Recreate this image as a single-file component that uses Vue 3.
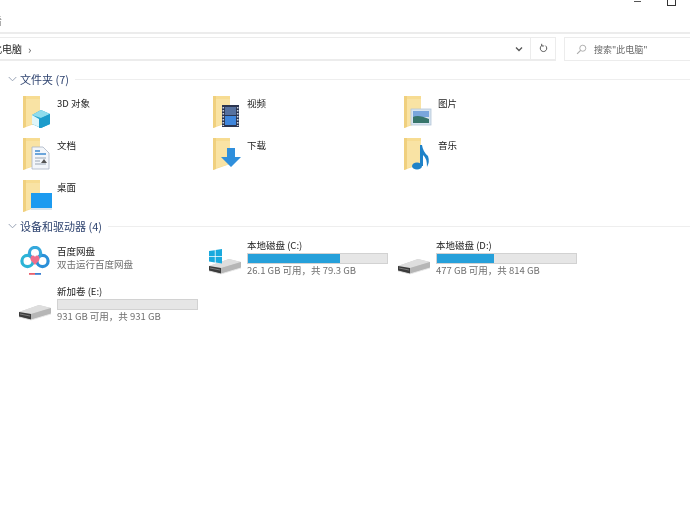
<script setup>
const folders = [
  { name: '3D 对象', kind: 'cube' },
  { name: '视频', kind: 'film' },
  { name: '图片', kind: 'photo' },
  { name: '文档', kind: 'doc' },
  { name: '下载', kind: 'down' },
  { name: '音乐', kind: 'music' },
  { name: '桌面', kind: 'desk' }
]
const drives = [
  { name: '本地磁盘 (C:)', used: 66, info: '26.1 GB 可用，共 79.3 GB', win: true },
  { name: '本地磁盘 (D:)', used: 41, info: '477 GB 可用，共 814 GB', win: false },
  { name: '新加卷 (E:)', used: 0, info: '931 GB 可用，共 931 GB', win: false }
]
</script>

<template>
  <div class="page">
    <div class="toolbar">
      <span class="tab">看</span>
      <div class="winbtns">
        <i class="minbtn"></i>
        <i class="maxbtn"></i>
      </div>
    </div>
    <div class="navrow">
      <div class="address">
        <span class="crumb">此电脑</span>
        <span class="sep">›</span>
        <svg class="dropdown" viewBox="0 0 8 6" width="8" height="6"><path d="M1 1.5 4 4.5 7 1.5" fill="none" stroke="#555" stroke-width="1.3"/></svg>
        <div class="refresh">
          <svg viewBox="0 0 10 12" width="9" height="11"><path d="M3 2.8A3.6 3.6 0 1 0 7 2.8M3 .8V3.2H5.4" fill="none" stroke="#555" stroke-width="1.1"/></svg>
        </div>
      </div>
      <div class="search">
        <svg viewBox="0 0 12 12" width="11" height="11"><circle cx="7.4" cy="4.6" r="3.3" fill="none" stroke="#aaa" stroke-width="1"/><path d="M5 7 1.2 10.8" stroke="#aaa" stroke-width="1.2"/></svg>
        <span>搜索"此电脑"</span>
      </div>
    </div>

    <div class="section-head first">
      <svg viewBox="0 0 10 6" width="9" height="6"><path d="M.8.8 5 5 9.2.8" fill="none" stroke="#8d99ad" stroke-width="1"/></svg>
      <span class="title">文件夹 (7)</span>
      <span class="rule"></span>
    </div>
    <div class="folders">
      <div v-for="f in folders" :key="f.name" class="folder">
        <svg class="ficon" viewBox="0 0 36 34" width="36" height="34">
          <path d="M1 1H18V27L1 33Z" fill="#f7dc92"/>
          <path d="M1 1H4V32L1 33Z" fill="#f0d07e"/>
          <path d="M4 4H18V27L4 31Z" fill="#f9e3a4"/>
          <g v-if="f.kind === 'cube'">
            <path d="M10 20 19 15 28 19V29L19 33 10 29Z" fill="#23a5cf"/>
            <path d="M10 20 19 15 28 19 19 23Z" fill="#8fdcec"/>
            <path d="M10 20 17 24V32L10 29Z" fill="#dff6fa"/>
            <path d="M17 24 28 19V29L19 33H17Z" fill="#1d9ccb"/>
          </g>
          <g v-else-if="f.kind === 'film'">
            <rect x="10" y="10" width="17" height="22" fill="#2b3550"/>
            <rect x="13" y="12" width="11" height="8" fill="#56719f"/>
            <rect x="13" y="21" width="11" height="9" fill="#3f86dc"/>
            <path d="M11.3 12V31M25.7 12V31" stroke="#cfd6e2" stroke-width="1.6" stroke-dasharray="1.5 1.5"/>
          </g>
          <g v-else-if="f.kind === 'photo'">
            <rect x="8" y="14" width="20" height="16" fill="#d8e4f0" stroke="#b4c6d8" stroke-width=".8"/>
            <rect x="10" y="16" width="16" height="6" fill="#7aa6dc"/>
            <path d="M10 22Q15 19 26 24V28H10Z" fill="#37756b"/>
          </g>
          <g v-else-if="f.kind === 'doc'">
            <path d="M10 10H21L27 16V32H10Z" fill="#f3f6fa" stroke="#a8b4c4" stroke-width=".8"/>
            <path d="M13 14H18M13 17H24" stroke="#3f8ad0" stroke-width="1.4"/>
            <path d="M13 21H24M13 24H18M13 27H24" stroke="#9aa6b4" stroke-width="1"/>
            <path d="M19 26 22 22 25 26Z" fill="#555"/>
          </g>
          <g v-else-if="f.kind === 'down'">
            <path d="M15 11H23V20H29L19 30 9 20H15Z" fill="#2f8fdc"/>
          </g>
          <g v-else-if="f.kind === 'music'">
            <ellipse cx="14" cy="29" rx="5" ry="3.6" fill="#1f82c8"/>
            <path d="M17 29V8H19Q20 15 25 19Q27 25 24 30Q24 21 20 18V29Z" fill="#1f82c8"/>
          </g>
          <g v-else>
            <rect x="9" y="14" width="21" height="15" fill="#1c9bf0"/>
            <rect x="9" y="29" width="21" height="2" fill="#d9e6ef"/>
          </g>
        </svg>
        <span class="fname">{{ f.name }}</span>
      </div>
    </div>

    <div class="section-head second">
      <svg viewBox="0 0 10 6" width="9" height="6"><path d="M.8.8 5 5 9.2.8" fill="none" stroke="#8d99ad" stroke-width="1"/></svg>
      <span class="title">设备和驱动器 (4)</span>
      <span class="rule"></span>
    </div>
    <div class="drives">
      <div class="drive baidu">
        <svg class="bicon" viewBox="0 0 30 32" width="30" height="32">
          <circle cx="7.5" cy="15" r="5.6" fill="none" stroke="#2cb4d6" stroke-width="3.2"/>
          <circle cx="22.5" cy="15" r="5.6" fill="none" stroke="#2a8fd8" stroke-width="3.2"/>
          <circle cx="15" cy="7" r="5.6" fill="none" stroke="#35a8dc" stroke-width="3.2"/>
          <path d="M15 19 10.6 14Q10 9.6 13 9.6 14.4 9.6 15 11 15.6 9.6 17 9.6 20 9.6 19.4 14Z" fill="#ef6f8c"/>
          <rect x="9" y="27" width="6" height="1.8" fill="#e8606e"/>
          <rect x="15" y="27" width="6" height="1.8" fill="#3c7fd0"/>
        </svg>
        <div class="dtext">
          <div class="dname">百度网盘</div>
          <div class="dinfo">双击运行百度网盘</div>
        </div>
      </div>
      <div v-for="d in drives" :key="d.name" class="drive">
        <div class="dicon">
          <svg viewBox="0 0 34 32" width="34" height="32">
            <path d="M1 23 21 16 33 19V25L13 31 1 28Z" fill="#cfcfcf"/>
            <path d="M1 23 21 16 33 19 13 25Z" fill="#dedede"/>
            <path d="M1 23 13 25V31L1 28Z" fill="#3b3b3b"/>
            <path d="M13 25 33 19V25L13 31Z" fill="#b6b6b6"/>
            <path d="M2 25 12 27" stroke="#8a8a8a" stroke-width=".8"/>
            <path d="M1 28 13 31 33 25" fill="none" stroke="#ececec" stroke-width=".9"/>
            <g v-if="d.win" fill="#19a9dd">
              <path d="M1 8 6.8 7.2V13H1Z"/>
              <path d="M7.6 7 14 6V13H7.6Z"/>
              <path d="M1 13.8H6.8V19.4L1 18.6Z"/>
              <path d="M7.6 13.8H14V20.4L7.6 19.5Z"/>
            </g>
          </svg>
        </div>
        <div class="dtext">
          <div class="dname">{{ d.name }}</div>
          <div class="bar"><div class="fill" :style="{ width: d.used + '%' }"></div></div>
          <div class="dinfo">{{ d.info }}</div>
        </div>
      </div>
    </div>
  </div>
</template>

<style>
html, body { margin: 0; background: #fff; }
</style>

<style scoped>
.page {
  width: 690px;
  height: 512px;
  overflow: hidden;
  background: #fff;
  font-family: "Noto Sans CJK SC", "Liberation Sans", sans-serif;
  color: #333;
  filter: blur(0.55px);
}
.toolbar {
  height: 32px;
  border-bottom: 2px solid #ececec;
  position: relative;
}
.tab {
  position: absolute;
  left: -8px;
  top: 15px;
  font-size: 10px;
  line-height: 12px;
  color: #444;
}
.winbtns {
  position: absolute;
  right: 14px;
  top: 0;
  display: flex;
  gap: 26px;
}
.minbtn {
  display: block;
  width: 7px;
  height: 1px;
  margin-top: 1px;
  background: #555;
}
.maxbtn {
  display: block;
  width: 7px;
  height: 5px;
  border: 1px solid #333;
  border-top: 0;
}
.navrow {
  display: flex;
  align-items: stretch;
  height: 24px;
  margin-top: 3px;
  padding-bottom: 18px;
  gap: 8px;
}
.address {
  width: 557px;
  margin-left: -1px;
  box-sizing: border-box;
  border: 1px solid #ececec;
  border-left: 0;
  border-bottom-width: 2px;
  display: flex;
  align-items: center;
  font-size: 10px;
  color: #222;
}
.crumb { margin-left: -7px; }
.sep { margin-left: 6px; color: #555; font-size: 11px; }
.dropdown { margin-left: auto; margin-right: 7px; }
.refresh {
  width: 24px;
  height: 100%;
  border-left: 1px solid #ececec;
  display: flex;
  align-items: center;
  justify-content: center;
}
.search {
  flex: 1;
  box-sizing: border-box;
  border: 1px solid #ececec;
  border-right: 0;
  display: flex;
  align-items: center;
  gap: 7px;
  padding-left: 11px;
  font-size: 9px;
  color: #666;
}
.section-head {
  display: flex;
  align-items: center;
  height: 14px;
  padding-left: 8px;
  gap: 3px;
}
.first { margin-top: -7px; }
.second { margin-top: -2px; }
.title {
  font-size: 11px;
  line-height: 14px;
  color: #2f4470;
  white-space: nowrap;
}
.rule {
  flex: 1;
  height: 1px;
  margin-left: 3px;
  background: #eeeeee;
}
.folders {
  display: grid;
  grid-template-columns: 190px 191px 1fr;
  grid-auto-rows: 42px;
  margin-top: 9px;
  padding-left: 22px;
}
.folder {
  display: flex;
  align-items: flex-start;
}
.ficon { flex: none; }
.fname {
  font-size: 9.5px;
  line-height: 14px;
  margin-top: 1px;
  margin-left: -1px;
  color: #222;
}
.drives {
  display: grid;
  grid-template-columns: 190px 189px 1fr;
  grid-auto-rows: 46px;
  margin-top: 6px;
  padding-left: 18px;
}
.drive {
  display: flex;
  align-items: flex-start;
}
.bicon { flex: none; margin-left: 2px; margin-top: 7px; }
.baidu .dtext { margin-left: 7px; margin-top: 6px; }
.dicon { flex: none; width: 34px; height: 32px; margin-top: 4px; }
.dtext { margin-left: 5px; width: 141px; }
.dname {
  font-size: 9.5px;
  line-height: 12px;
  color: #222;
  white-space: nowrap;
}
.dinfo {
  font-size: 9.5px;
  line-height: 12px;
  margin-top: 1px;
  color: #6f6f6f;
  white-space: nowrap;
}
.bar {
  height: 11px;
  margin-top: 2px;
  background: #e6e6e6;
  border: 1px solid #d2d2d2;
  box-sizing: border-box;
}
.bar + .dinfo { margin-top: 0; }
.fill {
  height: 100%;
  background: #26a0da;
}
</style>
